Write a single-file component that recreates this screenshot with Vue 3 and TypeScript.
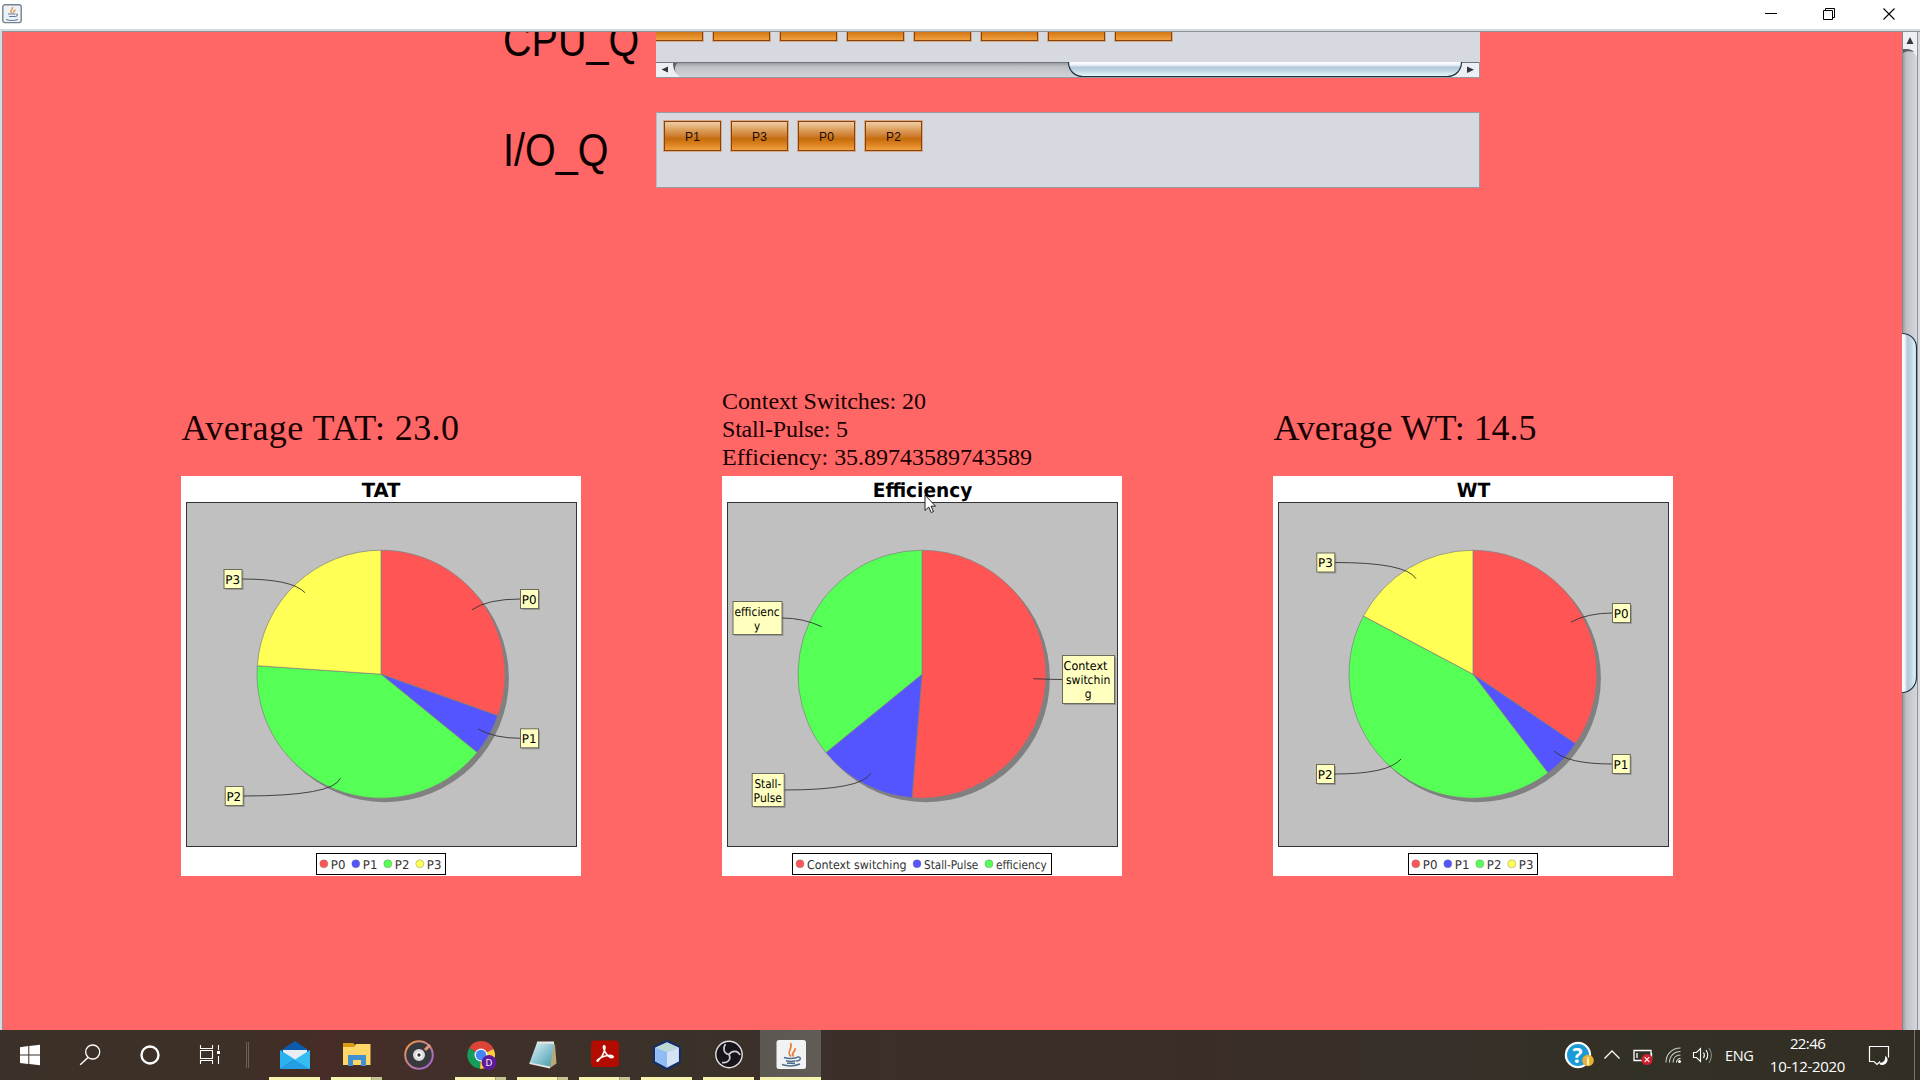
<script setup lang="ts">
interface Callout {
  lines: string[]
  x: number
  y: number
  w: number
  h: number
  textWidths: number[]
  from: [number, number]
}
interface LegendItem {
  text: string
  x: number
  width: number
  color: string
}
interface Chart {
  title: string
  titleX: number
  titleWidth: number
  values: number[]
  callouts: Callout[]
  legendX: number
  legendWidth: number
  legend: LegendItem[]
}

const CX = 200
const CY = 198.2
const R = 124
const colors = ['#ff5555', '#5555ff', '#55ff55', '#ffff55']

/* Only the lower edges of these cards show above the scrollbar. */
const cpuQueueLength = 8
const ioQueue = ['P1', 'P3', 'P0', 'P2']

const processLegend: LegendItem[] = colors.map((color, i) => ({
  text: 'P' + i,
  x: 142.8 + i * 32,
  width: 14.6,
  color,
}))

const small = (text: string, x: number, y: number, from: [number, number]): Callout => ({
  lines: [text], x, y, w: 18, h: 19, textWidths: [14.8], from,
})

const charts: Record<'tat' | 'eff' | 'wt', Chart> = {
  tat: {
    title: 'TAT', titleX: 200, titleWidth: 38.5, values: [28, 5, 37, 22],
    callouts: [
      small('P0', 339.5, 113.5, [291, 133.8]),
      small('P1', 339.5, 252.8, [297, 253]),
      small('P2', 44.2, 310.5, [159.3, 302.3]),
      small('P3', 43, 93.5, [124, 116.7]),
    ],
    legendX: 135.5, legendWidth: 129, legend: processLegend,
  },
  eff: {
    title: 'Efficiency', titleX: 200.5, titleWidth: 99.5, values: [20, 5, 14],
    callouts: [
      { lines: ['Context', 'switchin', 'g'], x: 340.5, y: 179.5, w: 52, h: 48, textWidths: [43.8, 44.4, 6.8], from: [311.3, 202.7] },
      { lines: ['Stall-', 'Pulse'], x: 30.2, y: 297.5, w: 32, h: 33, textWidths: [26.8, 28.4], from: [148.7, 297.3] },
      { lines: ['efficienc', 'y'], x: 11, y: 125.5, w: 49, h: 33, textWidths: [45.2, 6.2], from: [99.7, 150.7] },
    ],
    legendX: 70.5, legendWidth: 259,
    legend: [
      { text: 'Context switching', x: 78, width: 99.5, color: colors[0] },
      { text: 'Stall-Pulse', x: 195, width: 54.3, color: colors[1] },
      { text: 'efficiency', x: 267, width: 50.8, color: colors[2] },
    ],
  },
  wt: {
    title: 'WT', titleX: 200.5, titleWidth: 33.5, values: [20, 3, 25, 10],
    callouts: [
      small('P0', 339.5, 127.5, [298, 146]),
      small('P1', 339.3, 278.5, [281, 275]),
      small('P2', 43.5, 288.5, [128, 283]),
      small('P3', 43.8, 77, [143, 102.7]),
    ],
    legendX: 135.5, legendWidth: 129, legend: processLegend,
  },
}

function point(turn: number): string {
  const a = turn * Math.PI * 2
  return `${(CX + R * Math.sin(a)).toFixed(2)} ${(CY - R * Math.cos(a)).toFixed(2)}`
}

function slices(values: number[]): string[] {
  const total = values.reduce((a, b) => a + b, 0)
  let sum = 0
  return values.map((v) => {
    const start = sum / total
    sum += v
    const large = v / total > 0.5 ? 1 : 0
    return `M${CX} ${CY}L${point(start)}A${R} ${R} 0 ${large} 1 ${point(sum / total)}Z`
  })
}

/* Leader line: leaves the slice radially, then bends level with the callout. */
function leader(c: Callout): string {
  const [fx, fy] = c.from
  const ex = c.x > CX ? c.x : c.x + c.w
  const ey = c.y + c.h / 2
  const k = (ey - CY) / (fy - CY)
  return `M${fx} ${fy}Q${CX + (fx - CX) * k} ${ey} ${ex} ${ey}`
}

const columns = [
  { key: 'tat' as const, lines: ['Average TAT: 23.0'], widths: [277.5], big: true },
  { key: 'eff' as const, lines: ['Context Switches: 20', 'Stall-Pulse: 5', 'Efficiency: 35.89743589743589'], widths: [204, 126, 310], big: false },
  { key: 'wt' as const, lines: ['Average WT: 14.5'], widths: [263], big: true },
]

const apps = [
  { id: 'mail', state: 'run' },
  { id: 'files', state: 'multi' },
  { id: 'music', state: '' },
  { id: 'chrome', state: 'multi' },
  { id: 'notepad', state: 'multi' },
  { id: 'acrobat', state: 'multi' },
  { id: 'netbeans', state: 'run' },
  { id: 'obs', state: 'run' },
  { id: 'java', state: 'active' },
]
</script>

<template>
  <div class="screen">
    <header class="titlebar">
      <svg class="app-icon" width="20" height="20" viewBox="0 0 20 20">
        <rect x=".8" y=".8" width="18.4" height="17.8" rx="2" fill="#eef2f6" stroke="#76828e" stroke-width="1.4" />
        <path d="M10 9C6.500 6.500 11.500 6 10.500 3M12 9C10.500 7.500 13.500 7 13 5.500" fill="none" stroke="#e5994c" stroke-width="1.400" />
        <path d="M6 10h7.500M7 12.500h6M14 10c2 0 2 2.500-1 2.500M4 15.500q6 2 12 0" fill="none" stroke="#5d7f9e" stroke-width="1.200" />
      </svg>
      <div class="controls">
        <svg width="58" height="28" viewBox="0 0 58 28"><path d="M24 13.500h12" stroke="#000" /></svg>
        <svg width="58" height="28" viewBox="0 0 58 28"><path d="M23.500 10.500h9v9h-9zM25.500 10.500v-2h9v9h-2" fill="none" stroke="#000" /></svg>
        <svg width="58" height="28" viewBox="0 0 58 28"><path d="M24.500 8.500l11 11M35.500 8.500l-11 11" stroke="#000" stroke-width="1.100" /></svg>
      </div>
    </header>

    <div class="client">
      <main class="content">
        <section class="queue cpu">
          <div class="queue-label">CPU_Q</div>
          <div class="panel">
            <div class="jobs">
              <div v-for="n in cpuQueueLength" :key="n" class="job"></div>
            </div>
            <svg class="hbar" width="824" height="16" viewBox="0 0 824 16">
              <defs>
                <linearGradient id="track" x2="0" y2="1">
                  <stop offset="0" stop-color="#8f9297" /><stop offset=".3" stop-color="#bfc1c5" /><stop offset="1" stop-color="#d3d5da" />
                </linearGradient>
                <linearGradient id="thumb" x2="0" y2="1">
                  <stop offset="0" stop-color="#fff" /><stop offset=".2" stop-color="#eef2fb" /><stop offset=".36" stop-color="#b4c7d8" /><stop offset=".6" stop-color="#bfd5e2" /><stop offset="1" stop-color="#eafcff" />
                </linearGradient>
              </defs>
              <rect width="824" height="16" fill="url(#track)" />
              <path d="M0 0H17C17 8 20 13 26 16H0zM824 0H803C803 8 798 13 791 16H824z" fill="#eceff3" />
              <path d="M17 0h6C19 2 18 6 20 11C17.500 7 17 4 17 0z" fill="#5b5e63" />
              <path d="M0 .5H824" stroke="#717479" />
              <path d="M412.500 0C412.500 8 418 14.500 427 14.500H791C800 14.500 805.500 8 805.500 0z" fill="url(#thumb)" />
              <path d="M412.500 0C412.500 8 418 14.500 427 14.500H791C800 14.500 805.500 8 805.500 0" fill="none" stroke="#20323f" stroke-width="1.200" />
              <path d="M12 4.500v6L5.500 7.500zM811 4.500v6.500L818 7.700z" fill="#34383c" />
              <path d="M0 15.500H824M823.500 0V16" stroke="#96989f" />
            </svg>
          </div>
        </section>

        <section class="queue io">
          <div class="queue-label">I/O_Q</div>
          <div class="panel">
            <div class="jobs">
              <div v-for="(p, i) in ioQueue" :key="i" class="job">{{ p }}</div>
            </div>
          </div>
        </section>

        <section class="stats">
          <article v-for="col in columns" :key="col.key" class="column" :class="col.key">
            <div class="summary" :class="{ big: col.big }">
              <svg v-for="(line, i) in col.lines" :key="line" width="400" :height="col.big ? 50 : 28">
                <text v-if="col.big" x="0.500" y="34" font-size="36" :textLength="col.widths[i]">{{ line }}</text>
                <text v-else x="0" y="21" font-size="24" :textLength="col.widths[i]">{{ line }}</text>
              </svg>
            </div>
            <svg class="chart" width="400" height="400" viewBox="0 0 400 400">
              <rect width="400" height="400" fill="#fff" />
              <text class="chart-title" :x="charts[col.key].titleX" y="20.500" text-anchor="middle" :textLength="charts[col.key].titleWidth" lengthAdjust="spacingAndGlyphs">{{ charts[col.key].title }}</text>
              <rect x="5.500" y="26.500" width="390" height="344" fill="#c0c0c0" stroke="#333" />
              <circle :cx="CX + 3.900" :cy="CY + 4" :r="R" fill="#808080" />
              <path v-for="(d, i) in slices(charts[col.key].values)" :key="d" :d="d" :fill="colors[i]" stroke="#808080" stroke-width=".700" stroke-linejoin="bevel" />
              <g v-for="c in charts[col.key].callouts" :key="c.lines[0]">
                <path :d="leader(c)" fill="none" stroke="#333" stroke-width=".900" />
                <rect :x="c.x + 1.500" :y="c.y + 1.500" :width="c.w" :height="c.h" fill="#000" fill-opacity=".2" />
                <rect :x="c.x" :y="c.y" :width="c.w" :height="c.h" fill="#ffffc0" stroke="#6b6b5c" />
                <text
                  v-for="(t, i) in c.lines" :key="t" class="callout"
                  :x="t === 'Context' ? c.x + c.w / 2 - 3 : c.x + c.w / 2 - .4"
                  :y="c.y + 14.200 + i * 14.300" text-anchor="middle"
                  :textLength="c.textWidths[i]" lengthAdjust="spacingAndGlyphs"
                >{{ t }}</text>
              </g>
              <rect :x="charts[col.key].legendX" y="377.500" :width="charts[col.key].legendWidth" height="21" fill="#fff" stroke="#000" />
              <g v-for="l in charts[col.key].legend" :key="l.text">
                <circle :cx="l.x" cy="387.800" r="4" :fill="l.color" stroke="#777" stroke-width=".400" />
                <text class="legend" :x="l.x + 7" y="392.700" :textLength="l.width" lengthAdjust="spacingAndGlyphs">{{ l.text }}</text>
              </g>
            </svg>
          </article>
        </section>
      </main>

      <svg class="vbar" width="18" height="998" viewBox="0 0 18 998">
        <defs>
          <linearGradient id="vtrack"><stop offset="0" stop-color="#94969b" /><stop offset=".3" stop-color="#bfc1c6" /><stop offset="1" stop-color="#d5d7dc" /></linearGradient>
          <linearGradient id="vthumb"><stop offset="0" stop-color="#fff" /><stop offset=".2" stop-color="#eef2fb" /><stop offset=".36" stop-color="#b4c7d8" /><stop offset=".6" stop-color="#bfd5e2" /><stop offset="1" stop-color="#e6f9ff" /></linearGradient>
        </defs>
        <rect width="18" height="998" fill="#d6d9df" />
        <rect width="15" height="998" fill="url(#vtrack)" />
        <path d="M0 0H15V26C13 20 8 17.500 0 17.500z" fill="#eceff3" />
        <path d="M0 17h6C9 17.500 11 18.500 12 20C6 18.500 3 19 0 22z" fill="#5b5e63" />
        <path d="M.5 0V998" stroke="#84868c" />
        <path d="M0 301.500C8 301.500 14.500 307 14.500 316V645C14.500 654 8 660.500 0 660.500z" fill="url(#vthumb)" />
        <path d="M0 301.500C8 301.500 14.500 307 14.500 316V645C14.500 654 8 660.500 0 660.500" fill="none" stroke="#20323f" stroke-width="1.200" />
        <path d="M4.500 12h7L8 5z" fill="#34383c" />
        <path d="M15.500 0V998" stroke="#8f9299" />
      </svg>
    </div>

    <footer class="taskbar">
      <div class="sys">
        <svg viewBox="0 0 60 50"><path d="M20 17.200l8.300-1.200v8.500H20zM29.300 15.900L40 14.700v9.800H29.300zM20 25.500h8.300v8.500L20 32.900zM29.300 25.500H40v9.700l-10.700-1.300z" fill="#fff" /></svg>
        <svg viewBox="0 0 60 50"><circle cx="32.700" cy="22" r="7" fill="none" stroke="#fff" stroke-width="1.300" /><path d="M28 27.500l-7.800 7.300" stroke="#fff" stroke-width="1.500" /></svg>
        <svg viewBox="0 0 60 50"><circle cx="30" cy="25" r="8.500" fill="none" stroke="#fff" stroke-width="2.400" /></svg>
        <svg viewBox="0 0 60 50"><path d="M20.500 15v3.500h12V15M20.500 34v-3.500h12V34M20.500 20.500h12v8h-12zM38.500 15v5M38.500 26v8" fill="none" stroke="#fff" stroke-width="1.100" /><rect x="37" y="21" width="3" height="3" fill="#fff" /></svg>
      </div>
      <div class="divider"></div>
      <div class="apps">
        <div v-for="a in apps" :key="a.id" class="app" :class="a.state">
          <svg v-if="a.id === 'mail'" viewBox="0 0 30 30"><path d="M0 11L15 1l15 10v4H0z" fill="#0b5cad" /><path d="M3 10h24v10H3z" fill="#e9eef4" /><path d="M0 10l15 9.500L0 29z" fill="#2bb1ef" /><path d="M30 10v19H0z" fill="#35bdf3" /><path d="M14 19.500L30 29H0z" fill="#1f96e0" opacity=".75" /></svg>
          <svg v-else-if="a.id === 'files'" viewBox="0 0 30 30"><path d="M1 3h10l3 3h14v19H1z" fill="#e2a51c" /><path d="M1 7h11l2-3h14.500v21H1z" fill="#ffd768" /><path d="M1 3h10l2 3-1 1H1z" fill="#d99b12" /><path d="M6 26V15h18v11h-5v-6h-8v6z" fill="#3f8fd2" /></svg>
          <svg v-else-if="a.id === 'music'" viewBox="0 0 30 30"><defs><linearGradient id="ring" x2="1" y2="1"><stop offset="0" stop-color="#f59a3c" /><stop offset=".5" stop-color="#c07f96" /><stop offset="1" stop-color="#a45bd6" /></linearGradient></defs><circle cx="15" cy="15" r="13.800" fill="#37393d" stroke="url(#ring)" stroke-width="2" /><path d="M21 10l5-5" stroke="#e39a73" stroke-width="3" /><circle cx="15" cy="15" r="4.500" fill="#fff" stroke="#ddd" stroke-width="3" /><circle cx="15" cy="15" r="1.700" fill="#333" /></svg>
          <svg v-else-if="a.id === 'chrome'" viewBox="0 0 30 30"><path d="M15 15L3.200 8A13.700 13.700 0 0 1 27.500 9z" fill="#db4437" /><path d="M15 15L3.200 8A13.700 13.700 0 0 0 14 28.700z" fill="#159b5a" /><path d="M15 15l12.500-6A13.700 13.700 0 0 1 14 28.700z" fill="#ffcd40" /><circle cx="15" cy="15" r="6.500" fill="#f5f5f5" /><circle cx="15" cy="15" r="5.200" fill="#4285f4" /><circle cx="23" cy="22.500" r="7.400" fill="#5e1a9c" /><text x="23" y="26" text-anchor="middle" font-size="9.500" fill="#fff">D</text></svg>
          <svg v-else-if="a.id === 'notepad'" viewBox="0 0 30 30"><defs><linearGradient id="pad" x2="1" y2="1"><stop offset="0" stop-color="#e3f6fa" /><stop offset="1" stop-color="#3d97ab" /></linearGradient></defs><path d="M23 3l4 1.500 1.500 19-6.500 4.500z" fill="#b9a878" /><path d="M9 2.500L26 4l-4 23.500L1.500 23z" fill="url(#pad)" /><path d="M9 1.500h17v2.500L9 3.500zM1.500 22.500l20.500 4v2L1.500 24z" fill="#e8e8e4" /></svg>
          <svg v-else-if="a.id === 'acrobat'" viewBox="0 0 30 30"><rect x="1" y=".5" width="28" height="26.500" rx="4" fill="#b30b00" /><path d="M7 20.500C10 20 15 13 15 7.500C15 5 13 5 13.500 8C14.500 12.500 19 18.500 22.500 17.500C24.500 16.500 22 15 18.500 15.500C14 16 9 18.500 7.500 20C6.500 21.500 8 21.500 9 20" fill="none" stroke="#fff" stroke-width="1.600" /></svg>
          <svg v-else-if="a.id === 'netbeans'" viewBox="0 0 30 30"><path d="M15 1l13 6v15l-13 7-13-7V7z" fill="#a9cbf0" stroke="#162c66" stroke-width="2" stroke-linejoin="round" /><path d="M15 2.500l11.500 5L15 12 3.500 7.500z" fill="#bdd9d6" /><path d="M3.500 8L15 12.500V27L3.500 21.500z" fill="#8fbcf5" /><path d="M26.500 8L15 12.500V27l11.500-5.500z" fill="#d5e4f5" /></svg>
          <svg v-else-if="a.id === 'obs'" viewBox="0 0 30 30"><circle cx="15" cy="14.500" r="13.200" fill="#17151b" stroke="#e4e2e4" stroke-width="1.400" /><g fill="none" stroke="#d0ced2" stroke-width="1.700"><path d="M15 14.500C9.500 13.500 8.500 8 11.500 4" /><path d="M15 14.500C18 10 24 10.500 26 15" /><path d="M15 14.500C17.500 19.500 13.500 23.500 8 22.500" /></g></svg>
          <svg v-else viewBox="0 0 30 30"><rect x=".5" y="0" width="29.500" height="29" rx="2.500" fill="#f0f2f4" /><path d="M15 16.500C9.500 12 17.500 9 14.500 3M17.500 16.500C14 13 20.500 11.500 19 8" fill="none" stroke="#e8803a" stroke-width="1.700" /><path d="M8 17.500q6 2 13 0M10 20.700q5 1.500 9.500 0M21 17c5-.5 4 4-1 4M6 24.500q9 3 18-.5M11 23.200h8" fill="none" stroke="#4f6f8d" stroke-width="1.500" /></svg>
        </div>
      </div>
      <div class="tray">
        <svg class="help" viewBox="0 0 30 30"><circle cx="14" cy="14" r="13.200" fill="#fff" /><circle cx="14" cy="14" r="11" fill="#1c9ad6" /><text x="13.500" y="21.500" text-anchor="middle" font-size="21" font-weight="700" fill="#fff">?</text><circle cx="24" cy="19.500" r="5.800" fill="#e9b233" /><text x="24" y="23.500" text-anchor="middle" font-size="10" font-weight="700" fill="#fff">i</text></svg>
        <svg class="chev" viewBox="0 0 18 20"><path d="M1.500 13.500L9 6l7.500 7.500" fill="none" stroke="#fff" stroke-width="1.300" /></svg>
        <svg class="batt" viewBox="0 0 22 20"><path d="M1 4.500h17v10H1zM18.500 7v5M4 7v5" fill="none" stroke="#fff" stroke-width="1.300" /><circle cx="14" cy="13.500" r="5.600" fill="#d0202e" /><path d="M11.700 11.200l4.600 4.600M16.300 11.200l-4.600 4.600" stroke="#fff" stroke-width="1.200" /></svg>
        <svg class="wifi" viewBox="0 0 18 18"><g fill="none" stroke="#cfcdc8" stroke-width="1.100"><path d="M1 16.500C1 8 7 2 15.500 2" /><path d="M4.500 16.500C4.500 10 9 5.500 15.500 5.500" /><path d="M8 16.500C8 12 11 9 15.500 9" /></g><path d="M11.500 16.500C11.500 14 13 12.500 15.500 12.500" fill="none" stroke="#fff" /><circle cx="14.500" cy="15.500" r="1.500" fill="#fff" /></svg>
        <svg class="vol" viewBox="0 0 22 20"><g fill="none" stroke="#fff" stroke-width="1.100"><path d="M1.500 7.500h3l4-4v13l-4-4h-3zM11.500 7.500q1.800 2.500 0 5.500" /><path d="M14 5q3.500 5 0 10" /><path d="M17 3q5 7 0 15" stroke="#8d8a84" /></g></svg>
        <span class="lang">ENG</span>
        <div class="clock"><span>22:46</span><span class="date">10-12-2020</span></div>
        <svg class="note" viewBox="0 0 22 22"><path d="M12 17.500l-3 3-3-3H1.500V2.500h19v11" fill="none" stroke="#fff" stroke-width="1.200" /><path d="M17 12c4 1.500 3.500 8-2.500 9C11 21 11.500 19 11.500 18.500C15 19.500 18 16 17 12z" fill="#fff" /></svg>
        <i class="peek"></i>
      </div>
    </footer>

    <svg class="pointer" width="14" height="21" viewBox="0 0 14 21"><path d="M1 1v15.500l3.700-3.500 2.500 5.500 2.300-1-2.500-5.300h4.500z" fill="#fff" stroke="#222" stroke-width="1" /></svg>
  </div>
</template>

<style>
html, body { margin: 0; overflow: hidden; }
</style>

<style scoped>
.screen { position: relative; width: 1920px; height: 1080px; overflow: hidden; display: flex; flex-direction: column; background: #d6d9df; font-family: "Liberation Sans", Arial, sans-serif; }
.titlebar { height: 29px; flex: none; display: flex; justify-content: space-between; background: #fff; }
.app-icon { margin: 4px 0 0 2px; }
.controls { display: flex; margin-right: 3px; gap: 1px; }
.client { height: 998px; margin: 2px 0 0 2px; border-top: 1px solid #8f9299; border-left: 1px solid #8f9299; flex: none; display: flex; }
.content { width: 1899px; height: 998px; background: #ff6666; overflow: hidden; }
.vbar { flex: none; display: block; }

.queue { display: flex; margin-left: 500px; overflow: hidden; }
.queue-label { width: 153px; height: 60px; flex: none; font-size: 46.500px; line-height: 60px; transform: scaleX(.85); transform-origin: 0 0; white-space: nowrap; color: #0a0000; }
.panel { width: 824px; box-sizing: border-box; background: #d6d9df; border-right: 1px solid #9a9ca3; overflow: hidden; }
.cpu { height: 46px; }
.cpu .queue-label { margin-top: -22px; }
.cpu .jobs { height: 30px; overflow: hidden; }
.cpu .job { margin-top: -21px; }
.cpu .job:first-child { margin-left: -10px; }
.hbar { display: block; }
.cpu .panel { border-right: 0; }
.io { height: 76px; margin-top: 34px; }
.io .queue-label { margin-top: 8px; }
.io .panel { border: 1px solid #9a9ca3; border-left-color: #c0b8be; }
.io .jobs { padding: 8px 0 0 7px; }
.jobs { display: flex; gap: 10px; }
.job { width: 57px; height: 30px; flex: none; box-sizing: border-box; border: 1px solid #88430c; box-shadow: 0 0 0 1px #d5a98a; background: linear-gradient(#f0cda8 0%, #dfa464 25%, #d2853a 45%, #c56c0c 60%, #dc8220 80%, #f0a040 100%); font-size: 12px; line-height: 30px; text-align: center; color: #1a0a00; letter-spacing: .2px; }

.stats { display: flex; margin: 200px 0 0 178px; align-items: flex-start; }
.column { width: 400px; display: flex; flex-direction: column; }
.column.eff { margin-left: 141px; }
.column.wt { margin-left: 151px; }
.summary { height: 88px; display: flex; flex-direction: column; font-family: "Liberation Serif", "Times New Roman", serif; }
.summary.big { box-sizing: border-box; padding-top: 18px; }
.summary svg { display: block; flex: none; overflow: visible; }
.summary text { fill: #160000; }
.chart { display: block; }
.chart text { font-family: "DejaVu Sans", sans-serif; text-rendering: geometricPrecision; }
.chart .chart-title { font-family: "DejaVu Sans Condensed", "DejaVu Sans", sans-serif; font-size: 19.500px; font-weight: 700; }
.callout { font-size: 12px; fill: #000; }
.chart .legend { font-size: 12px; fill: #333; }

.taskbar { height: 50px; flex: none; display: flex; background: linear-gradient(90deg, #3c3128 0, #3c3027 12%, #472c27 17%, #40302a 25%, #3a3229 35%, #3c2e29 46%, #3b2d27 60%, #37302a 75%, #333025 85%, #322e25 100%); color: #fff; font-family: "Open Sans", "Noto Sans", sans-serif; }
.sys { display: flex; }
.sys svg { width: 60px; height: 50px; display: block; }
.divider { width: 1px; height: 26px; margin: 12px 15px 0 6px; border: solid #6c625b; border-width: 0 1px; }
.apps { display: flex; }
.app { width: 61px; margin-right: 1px; display: flex; flex-direction: column; align-items: center; justify-content: space-between; height: 50px; }
.app svg { width: 30px; height: 30px; margin-top: 10px; display: block; overflow: visible; }
.app.run::after, .app.multi::after, .app.active::after { content: ""; width: 51px; height: 3px; background: #f7f4af; }
.app.multi::after { background: linear-gradient(90deg, #f7f4af 40px, #a5a277 40px, #a5a277 41px, #c6c490 41px); }
.app.active { background: linear-gradient(90deg, #5b5751, #625c56); }
.app.active::after { width: 61px; }
.tray { margin-left: auto; display: flex; align-items: center; height: 50px; }
.tray svg { display: block; flex: none; overflow: visible; }
.help { width: 30px; height: 30px; margin: 2px 9px 0 0; }
.chev { width: 18px; height: 20px; margin-right: 12px; }
.batt { width: 22px; height: 20px; margin: 1px 10px 0 0; }
.wifi { width: 18px; height: 18px; margin: 0 9px 0 0; }
.vol { width: 22px; height: 20px; margin-right: 11px; }
.lang { font-size: 14.500px; letter-spacing: -.4px; width: 28px; margin-right: 16px; }
.clock { width: 77px; display: flex; flex-direction: column; align-items: center; font-size: 15px; line-height: 23px; letter-spacing: -.6px; }
.clock .date { letter-spacing: -.3px; }
.note { width: 22px; height: 22px; margin: 0 24px 0 22px; }
.peek { width: 1px; height: 50px; background: #77736c; margin-right: 5px; }
.pointer { position: absolute; left: 924px; top: 494px; }
</style>
